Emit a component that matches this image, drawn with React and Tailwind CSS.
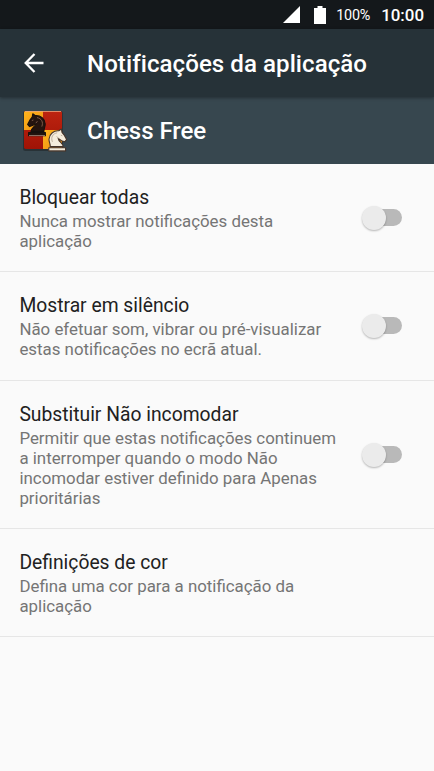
const settings = [
  {
    title: "Bloquear todas",
    lines: ["Nunca mostrar notificações desta", "aplicação"],
    toggle: true,
    padding: "pt-[22px] pb-[20px]",
  },
  {
    title: "Mostrar em silêncio",
    lines: ["Não efetuar som, vibrar ou pré-visualizar", "estas notificações no ecrã atual."],
    toggle: true,
    padding: "pt-[22px] pb-[21px]",
  },
  {
    title: "Substituir Não incomodar",
    lines: [
      "Permitir que estas notificações continuem",
      "a interromper quando o modo Não",
      "incomodar estiver definido para Apenas",
      "prioritárias",
    ],
    toggle: true,
    padding: "pt-[22px] pb-[20px]",
  },
  {
    title: "Definições de cor",
    lines: ["Defina uma cor para a notificação da", "aplicação"],
    toggle: false,
    padding: "pt-[22px] pb-[20px]",
  },
];

function Knight({ fill, stroke, detail, base }) {
  return (
    <g strokeLinejoin="round">
      <path
        d="M4 18.4C4.2 14.8 8.6 13.8 9 10.2L5.6 12.6L2.6 13.6L0.6 11.4L3.2 6.6L5.2 4.2L5.8 0.8L8.4 2.6C13.6 2.2 18 6 18.2 11C18.3 14 16.6 16 17 18.4Z"
        fill={fill}
        stroke={stroke}
        strokeWidth="1.1"
      />
      <path d="M1.6 19.6H18.4V22.8H1.6Z" fill={fill} stroke={stroke} strokeWidth="1.1" />
      <path d="M10 4.6C14.4 5.4 16.6 9 14.8 13.6M4.8 7.6L6.4 7M8.8 10.2L10.4 8.2" fill="none" stroke={detail} strokeWidth="0.9" />
      <path d="M2 22.6H18" stroke={base} strokeWidth="0.7" />
    </g>
  );
}

function ChessIcon() {
  return (
    <svg className="block w-[48px] h-[48px]" viewBox="0 0 48 48">
      <defs>
        <linearGradient id="red" x1="0" y1="0" x2="0" y2="1">
          <stop offset="0" stopColor="#bd2410" />
          <stop offset="1" stopColor="#a01306" />
        </linearGradient>
        <linearGradient id="gold" x1="0" y1="0" x2="1" y2="1">
          <stop offset="0" stopColor="#ffb51c" />
          <stop offset="1" stopColor="#ee8f12" />
        </linearGradient>
      </defs>
      <rect x="3" y="4" width="39.8" height="40" rx="2.5" fill="#20282b" opacity="0.65" />
      <rect x="4" y="4" width="38" height="38" rx="1.8" fill="url(#red)" />
      <path d="M5.8 4H23V23H4V5.8Q4 4 5.8 4Z" fill="url(#gold)" />
      <path d="M23 23H42V42H23Z" fill="url(#gold)" />
      <path d="M5 4.5H41" stroke="#e8a37c" strokeWidth="0.8" />
      <g transform="translate(7 6)">
        <Knight fill="#24140e" stroke="#17100d" detail="#84604d" base="#c5a69a" />
      </g>
      <g transform="translate(47.2 21.2) scale(-1 1)">
        <Knight fill="#f5eddc" stroke="#45342a" detail="#b5a793" base="#574438" />
      </g>
    </svg>
  );
}

function Toggle() {
  return (
    <div className="w-[40px] h-[26px] shrink-0 flex items-center mb-[2px]">
      <div className="w-[24px] h-[24px] rounded-full bg-[#ebebeb] shadow-[0_1px_2px_rgba(0,0,0,0.28)] relative z-10" />
      <div className="w-[28px] h-[17px] -ml-[12px] rounded-full bg-[#b9b9b9]" />
    </div>
  );
}

function SettingRow({ title, lines, toggle, padding }) {
  return (
    <div className={`flex items-center border-b border-[#e6e6e6] pl-[19.4px] pr-[32px] ${padding}`}>
      <div className="flex-1 whitespace-nowrap">
        <h2 className="text-[19.3px] leading-[23px] text-[#212121]">{title}</h2>
        <div className="mt-[2px] text-[16.86px] leading-[20px] text-[#757575]">
          {lines.map((line) => (
            <p key={line}>{line}</p>
          ))}
        </div>
      </div>
      {toggle && <Toggle />}
    </div>
  );
}

function App() {
  return (
    <div className="w-full h-screen overflow-hidden bg-[#fafafa] font-['Roboto',sans-serif]">
      <div className="h-[29px] bg-[#14181b] text-white flex items-center justify-end pr-[10px]">
        <svg className="w-[17px] h-[17px]" viewBox="0 0 17 17" fill="#fff">
          <path d="M17 0V17H0Z" />
        </svg>
        <svg className="w-[12px] h-[18px] ml-[14px]" viewBox="0 0 12 18" fill="#fff">
          <path d="M3.5 0H8.5V2H12V18H0V2H3.5Z" />
        </svg>
        <span className="text-[14.4px] tracking-[-0.2px] ml-[10px] mt-[2px]">100%</span>
        <span className="text-[16.9px] font-medium ml-[11px] mt-[2px]">10:00</span>
      </div>

      <div className="relative z-10 h-[68px] bg-[#263238] shadow-[0_1px_3px_rgba(0,0,0,0.35)] flex items-center pl-[24px]">
        <svg className="w-[20px] h-[20px]" viewBox="0 0 20 20" fill="none" stroke="#fff" strokeWidth="2.3">
          <path d="M19.5 10H2M10.5 1L1.7 10L10.5 19" />
        </svg>
        <h1 className="ml-[43px] mt-[2px] text-[24.1px] tracking-[0.05px] font-medium text-white whitespace-nowrap">
          Notificações da aplicação
        </h1>
      </div>

      <div className="h-[67px] bg-[#37474f] flex items-center pl-[20px] pt-px">
        <ChessIcon />
        <span className="ml-[19px] mt-px text-[24.1px] tracking-[-0.07px] font-medium text-white">Chess Free</span>
      </div>

      {settings.map((item) => (
        <SettingRow key={item.title} {...item} />
      ))}
    </div>
  );
}

export default App;
